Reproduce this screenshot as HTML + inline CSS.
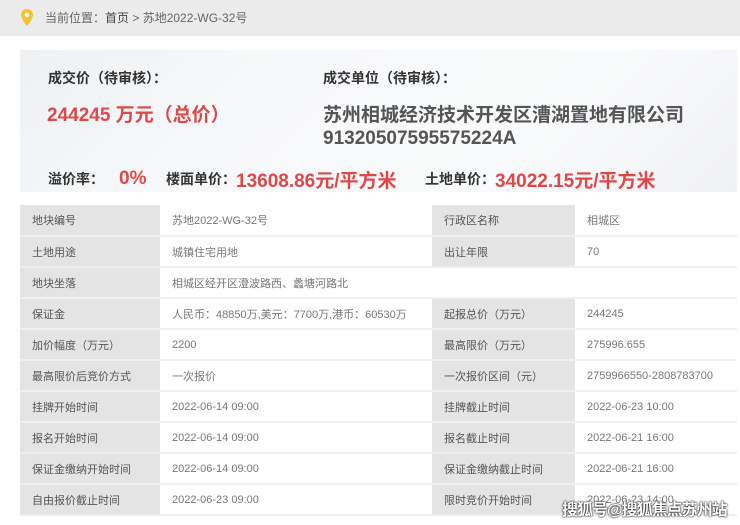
<!DOCTYPE html>
<html><head><meta charset="utf-8"><style>
*{margin:0;padding:0;box-sizing:border-box}
body{width:740px;height:525px;overflow:hidden;background:#fff;font-family:"Liberation Sans","Noto Sans CJK SC",sans-serif;position:relative}
.hdr{position:absolute;left:0;top:0;width:740px;height:36px;background:#ebebeb;font-size:12px;color:#666;line-height:36px;padding-left:45px}
.hdr b{font-weight:normal;color:#444}
.pin{position:absolute;left:21px;top:9px}
.card{position:absolute;left:20px;top:50px;width:717px;height:142px;background:linear-gradient(135deg,#eef0f2 0%,#f7f8f9 30%,#f9fafb 70%,#f0f1f3 100%)}
.t{position:absolute;white-space:nowrap}
.lb{font-size:14px;font-weight:bold;color:#333}
.red{color:#e04848;font-weight:bold}
.row{position:absolute;left:48px;top:166px;height:26px;display:flex;align-items:center;white-space:nowrap}
.row span{display:inline-block}
table{position:absolute;left:20px;top:205px;width:717px;border-collapse:collapse;font-size:11px}
td{height:31px;border-bottom:2px solid #f0f0f0;padding-left:12px;color:#777}
td.l{background:#e4e4e4;color:#555;width:140px;border-bottom:2px solid #efefef}
td.v1{width:272px}
td.l2{width:143px}
.wm{position:absolute;left:562px;top:496px;font-size:16px;font-weight:bold;color:#fff;white-space:nowrap;text-shadow:0 0 2px #000,0 0 1px #000;letter-spacing:-1px}
</style></head><body>
<div class="hdr">当前位置：<b>首页</b> &gt; 苏地2022-WG-32号</div>
<svg class="pin" width="12" height="18" viewBox="0 0 12 18"><path d="M6 0C2.7 0 0 2.6 0 5.9c0 3.8 6 11.1 6 11.1s6-7.3 6-11.1C12 2.6 9.3 0 6 0z" fill="#f5c22b"/><circle cx="6" cy="6" r="2.3" fill="#fff"/></svg>
<div class="card"></div>
<div class="t lb" style="left:48px;top:68px">成交价（待审核）：</div>
<div class="t red" style="left:47px;top:100px;font-size:19px">244245 万元（总价）</div>
<div class="t lb" style="left:323px;top:68px">成交单位（待审核）：</div>
<div class="t" style="left:323px;top:100px;font-size:19px;font-weight:bold;color:#555">苏州相城经济技术开发区漕湖置地有限公司</div>
<div class="t" style="left:323px;top:128px;font-size:19px;font-weight:bold;color:#555">91320507595575224A</div>
<div class="row">
<span class="lb" style="width:71px">溢价率：</span>
<span class="red" style="font-size:19px;width:47px">0%</span>
<span class="lb">楼面单价：</span>
<span class="red" style="font-size:19px;width:189px">13608.86元/平方米</span>
<span class="lb">土地单价：</span>
<span class="red" style="font-size:19px">34022.15元/平方米</span>
</div>
<table>
<tr><td class="l">地块编号</td><td class="v1">苏地2022-WG-32号</td><td class="l l2">行政区名称</td><td>相城区</td></tr>
<tr><td class="l">土地用途</td><td>城镇住宅用地</td><td class="l">出让年限</td><td>70</td></tr>
<tr><td class="l">地块坐落</td><td colspan="3">相城区经开区澄波路西、蠡塘河路北</td></tr>
<tr><td class="l">保证金</td><td>人民币：48850万,美元：7700万,港币：60530万</td><td class="l">起报总价（万元）</td><td>244245</td></tr>
<tr><td class="l">加价幅度（万元）</td><td>2200</td><td class="l">最高限价（万元）</td><td>275996.655</td></tr>
<tr><td class="l">最高限价后竞价方式</td><td>一次报价</td><td class="l">一次报价区间（元）</td><td>2759966550-2808783700</td></tr>
<tr><td class="l">挂牌开始时间</td><td>2022-06-14 09:00</td><td class="l">挂牌截止时间</td><td>2022-06-23 10:00</td></tr>
<tr><td class="l">报名开始时间</td><td>2022-06-14 09:00</td><td class="l">报名截止时间</td><td>2022-06-21 16:00</td></tr>
<tr><td class="l">保证金缴纳开始时间</td><td>2022-06-14 09:00</td><td class="l">保证金缴纳截止时间</td><td>2022-06-21 16:00</td></tr>
<tr><td class="l">自由报价截止时间</td><td>2022-06-23 09:00</td><td class="l">限时竞价开始时间</td><td>2022-06-23 14:00</td></tr>
</table>
<div class="wm">搜狐号@搜狐焦点苏州站</div>
</body></html>
